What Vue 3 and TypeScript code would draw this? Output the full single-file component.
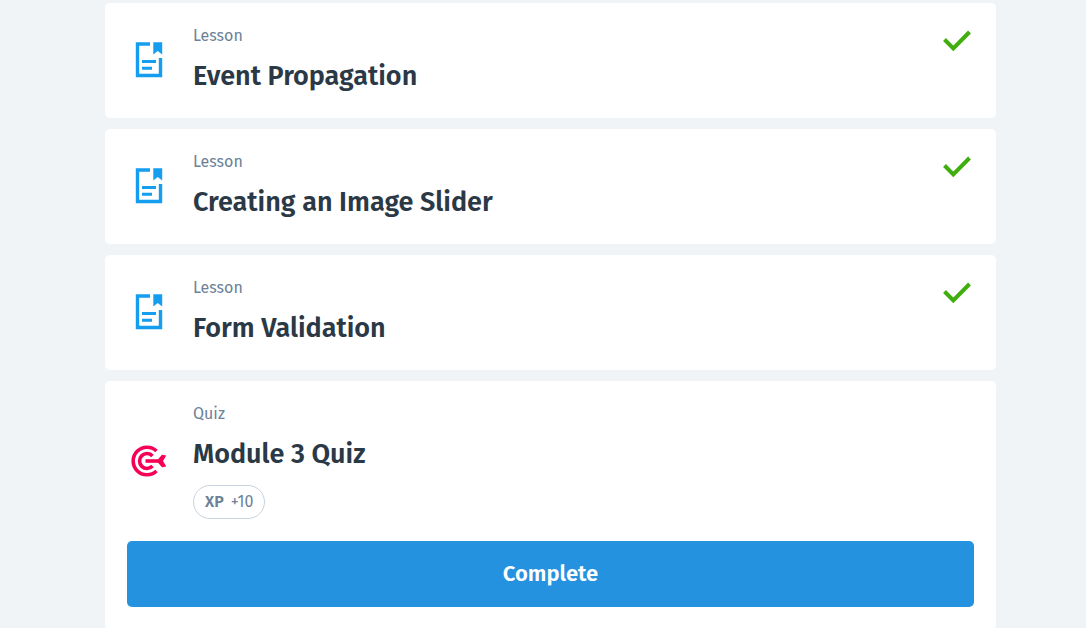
<script setup lang="ts">
interface CourseItem {
  id: number
  kind: 'Lesson' | 'Quiz'
  title: string
  done: boolean
  xp?: number
}

const items: CourseItem[] = [
  { id: 1, kind: 'Lesson', title: 'Event Propagation', done: true },
  { id: 2, kind: 'Lesson', title: 'Creating an Image Slider', done: true },
  { id: 3, kind: 'Lesson', title: 'Form Validation', done: true },
  { id: 4, kind: 'Quiz', title: 'Module 3 Quiz', done: false, xp: 10 },
]
</script>

<template>
  <main class="course">
    <article v-for="item in items" :key="item.id" class="card">
      <div class="row">
        <div class="icon">
          <svg v-if="item.kind === 'Lesson'" width="28" height="36" viewBox="0 0 28 36" aria-hidden="true">
            <path d="M15 2H2.500V33.500H25.500V16" fill="none" stroke="#159df0" stroke-width="3.400" />
            <path d="M18.300 0.300H27.200V12.500L22.700 9L18.300 12.500Z" fill="#159df0" />
            <path d="M7 19.500H21M7 26.300H17" fill="none" stroke="#159df0" stroke-width="3" />
          </svg>
          <svg v-else width="36" height="32" viewBox="0 0 36 32" aria-hidden="true">
            <g fill="none" stroke="#f50057" stroke-width="3.600">
              <path d="M25.500 6A13.800 13.800 0 1 0 25.500 26" />
              <path d="M21.500 11A7.430 7.430 0 1 0 21.500 21" />
              <path d="M14.500 16H30" />
            </g>
            <path d="M25.500 16L31 9.800L35.300 10.600L32 16L35.300 21.400L31 22.200Z" fill="#f50057" />
          </svg>
        </div>
        <div class="details">
          <p class="kind">{{ item.kind }}</p>
          <h2 class="title">{{ item.title }}</h2>
          <span v-if="item.xp" class="xp"><b>XP</b><span>+{{ item.xp }}</span></span>
        </div>
        <svg v-if="item.done" class="check" width="28" height="22" viewBox="0 0 28 22" role="img" aria-label="Completed">
          <path d="M1.500 9.500L10.300 18.300L26.500 2" fill="none" stroke="#3fae0e" stroke-width="4" />
        </svg>
      </div>
      <button v-if="!item.done" type="button" class="complete">Complete</button>
    </article>
  </main>
</template>

<style>
body {
  margin: 0;
  background: #f0f4f7;
}
</style>

<style scoped>
.course {
  display: flex;
  flex-direction: column;
  gap: 11px;
  padding: 3px 90px 0 105px;
  font-family: "Fira Sans", "Noto Sans", sans-serif;
  color: #2b3947;
}
.card {
  padding: 22px 22px 23px;
  border-radius: 5px;
  background: #fff;
}
.row {
  display: flex;
  align-items: center;
}
.icon {
  display: flex;
  flex: none;
  justify-content: center;
  width: 44px;
}
.details {
  flex: 1;
  min-width: 0;
  margin-left: 22px;
}
.kind {
  margin: 0;
  font-size: 16px;
  line-height: 21px;
  color: #6b8299;
}
.title {
  margin: 11px 0 0;
  font-size: 27px;
  font-weight: 600;
  line-height: 38px;
}
.xp {
  display: inline-flex;
  align-items: center;
  gap: 7px;
  box-sizing: border-box;
  height: 34px;
  margin-top: 12px;
  padding: 0 11px;
  border: 1px solid #c8d3de;
  border-radius: 17px;
  font-size: 16px;
  line-height: 22px;
  color: #6b8299;
  vertical-align: top;
}
.xp b {
  font-weight: 600;
}
.check {
  flex: none;
  align-self: flex-start;
  margin: 5px 3px 0 0;
}
.complete {
  display: block;
  width: 100%;
  height: 66px;
  margin-top: 22px;
  padding: 0 0 2px;
  border: 0;
  border-radius: 5px;
  background: #2492df;
  color: #fff;
  font-family: inherit;
  font-size: 22px;
  font-weight: 600;
  cursor: pointer;
}
</style>
